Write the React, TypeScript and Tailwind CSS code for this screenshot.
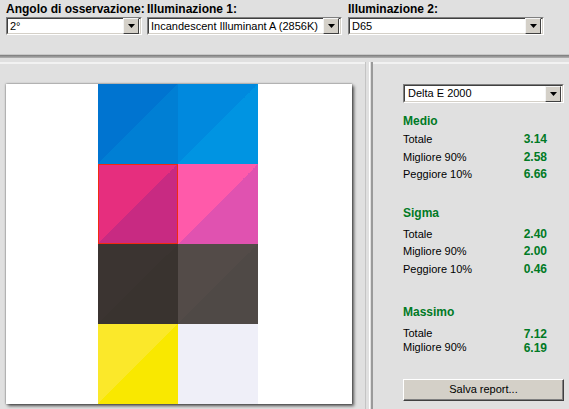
import React from 'react'

const GREEN = 'text-[#007a25]'

function ArrowButton() {
  return (
    <div className="flex h-[16px] w-[16px] items-center justify-center border border-t-[#f4f4f4] border-l-[#f4f4f4] border-b-[#404040] border-r-[#404040] bg-[#d4d0c8]">
      <svg width="7" height="4" viewBox="0 0 7 4">
        <path d="M0 0h7L3.5 4z" fill="#000" />
      </svg>
    </div>
  )
}

function Combo({ value, className }: { value: string; className: string }) {
  return (
    <div className={`flex border border-t-[#808080] border-l-[#808080] border-b-white border-r-white ${className}`}>
      <div className="flex flex-1 items-center border border-t-[#404040] border-l-[#404040] border-b-[#d4d0c8] border-r-[#d4d0c8] bg-white pr-[1px]">
        <span className="flex-1 truncate pl-[2px] text-[11px] leading-none text-black">{value}</span>
        <ArrowButton />
      </div>
    </div>
  )
}

function Swatch({ a, b, outline }: { a: string; b: string; outline?: boolean }) {
  return (
    <div
      className={outline ? 'border border-[#f22a10]' : ''}
      style={{ background: `linear-gradient(to bottom right, ${a} 50%, ${b} 50%)` }}
    />
  )
}

const swatches = [
  { a: '#0074d0', b: '#007fd4' },
  { a: '#0089de', b: '#0094e2' },
  { a: '#e62e7e', b: '#c82a82', outline: true },
  { a: '#ff5aaa', b: '#e052b0' },
  { a: '#3b3431', b: '#39332f' },
  { a: '#534b48', b: '#4f4946' },
  { a: '#fbe82a', b: '#f9e800' },
  { a: '#efeff8', b: '#efeff8' },
]

function StatRow({ label, value, tight }: { label: string; value: string; tight?: boolean }) {
  return (
    <div className={`flex items-center justify-between ${tight ? 'h-[14px]' : 'h-[17.5px]'}`}>
      <span className="text-[11px] text-black">{label}</span>
      <span className={`text-[12px] font-bold ${GREEN}`}>{value}</span>
    </div>
  )
}

function Heading({ children, className }: { children: React.ReactNode; className: string }) {
  return <div className={`h-[14px] text-[12px] font-bold leading-[14px] ${GREEN} ${className}`}>{children}</div>
}

export default function App() {
  return (
    <div className="flex h-[409px] w-[569px] flex-col overflow-hidden bg-[#e0e0e0] font-['Liberation_Sans',Arial,sans-serif]">
      {/* toolbar */}
      <div className="h-[55px] shrink-0 border-b border-[#c8c8c8] px-[6px] pt-[3px]">
        <div className="flex">
          <div className="w-[141px] text-[12px] font-bold leading-[13px] text-black">Angolo di osservazione:</div>
          <div className="w-[201px] text-[12px] font-bold leading-[13px] text-black">Illuminazione 1:</div>
          <div className="text-[12px] font-bold leading-[13px] text-black">Illuminazione 2:</div>
        </div>
        <div className="mt-[1px] flex">
          <Combo value="2°" className="h-[18px] w-[136px]" />
          <Combo value="Incandescent Illuminant A (2856K)" className="ml-[5px] h-[18px] w-[195px]" />
          <Combo value="D65" className="ml-[6px] h-[18px] w-[196px]" />
        </div>
      </div>
      <div className="h-[3px] shrink-0 bg-gradient-to-b from-[#7a7a7a] to-[#b4b4b4]" />

      {/* panels */}
      <div className="flex flex-1 pt-[4px]">
        <div className="w-[365px] border-t-2 border-[#f2f2f2] pl-[6px] pt-[20px]">
          <div className="h-[320px] w-[346px] bg-white shadow-[0_0_2px_rgba(0,0,0,0.55),2px_2px_3px_rgba(0,0,0,0.6)]">
            <div className="ml-[92px] grid grid-cols-[80px_80px] grid-rows-[80px_80px_80px_80px]">
              {swatches.map((s, i) => (
                <Swatch key={i} a={s.a} b={s.b} outline={s.outline} />
              ))}
            </div>
          </div>
        </div>

        {/* splitter */}
        <div className="flex w-[8px]">
          <div className="w-[1px] bg-[#c4c4c4]" />
          <div className="w-[3px]" />
          <div className="w-[1px] bg-white" />
          <div className="w-[1px]" />
          <div className="w-[2px] bg-[#9a9a9a]" />
        </div>

        <div className="flex-1 border-t-2 border-[#f2f2f2] pl-[30px] pr-[5px] pt-[20px]">
          <Combo value="Delta E 2000" className="h-[19px] w-[161px] [&_span]:pl-[3px]" />
          <div className="w-[144px]">
            <Heading className="mt-[11px]">Medio</Heading>
            <div className="mt-[2.5px]">
              <StatRow label="Totale" value="3.14" />
              <StatRow label="Migliore 90%" value="2.58" />
              <StatRow label="Peggiore 10%" value="6.66" />
            </div>
            <Heading className="mt-[23px]">Sigma</Heading>
            <div className="mt-[5px]">
              <StatRow label="Totale" value="2.40" />
              <StatRow label="Migliore 90%" value="2.00" />
              <StatRow label="Peggiore 10%" value="0.46" />
            </div>
            <Heading className="mt-[27px]">Massimo</Heading>
            <div className="mt-[8px]">
              <StatRow label="Totale" value="7.12" tight />
              <StatRow label="Migliore 90%" value="6.19" tight />
            </div>
          </div>
          <button className="mt-[24px] flex h-[22px] w-[161px] items-center justify-center border border-t-white border-l-white border-b-[#404040] border-r-[#404040] bg-[#d4d0c8] text-[11px] text-black shadow-[inset_-1px_-1px_0_#808080]">
            Salva report...
          </button>
        </div>
      </div>
    </div>
  )
}
